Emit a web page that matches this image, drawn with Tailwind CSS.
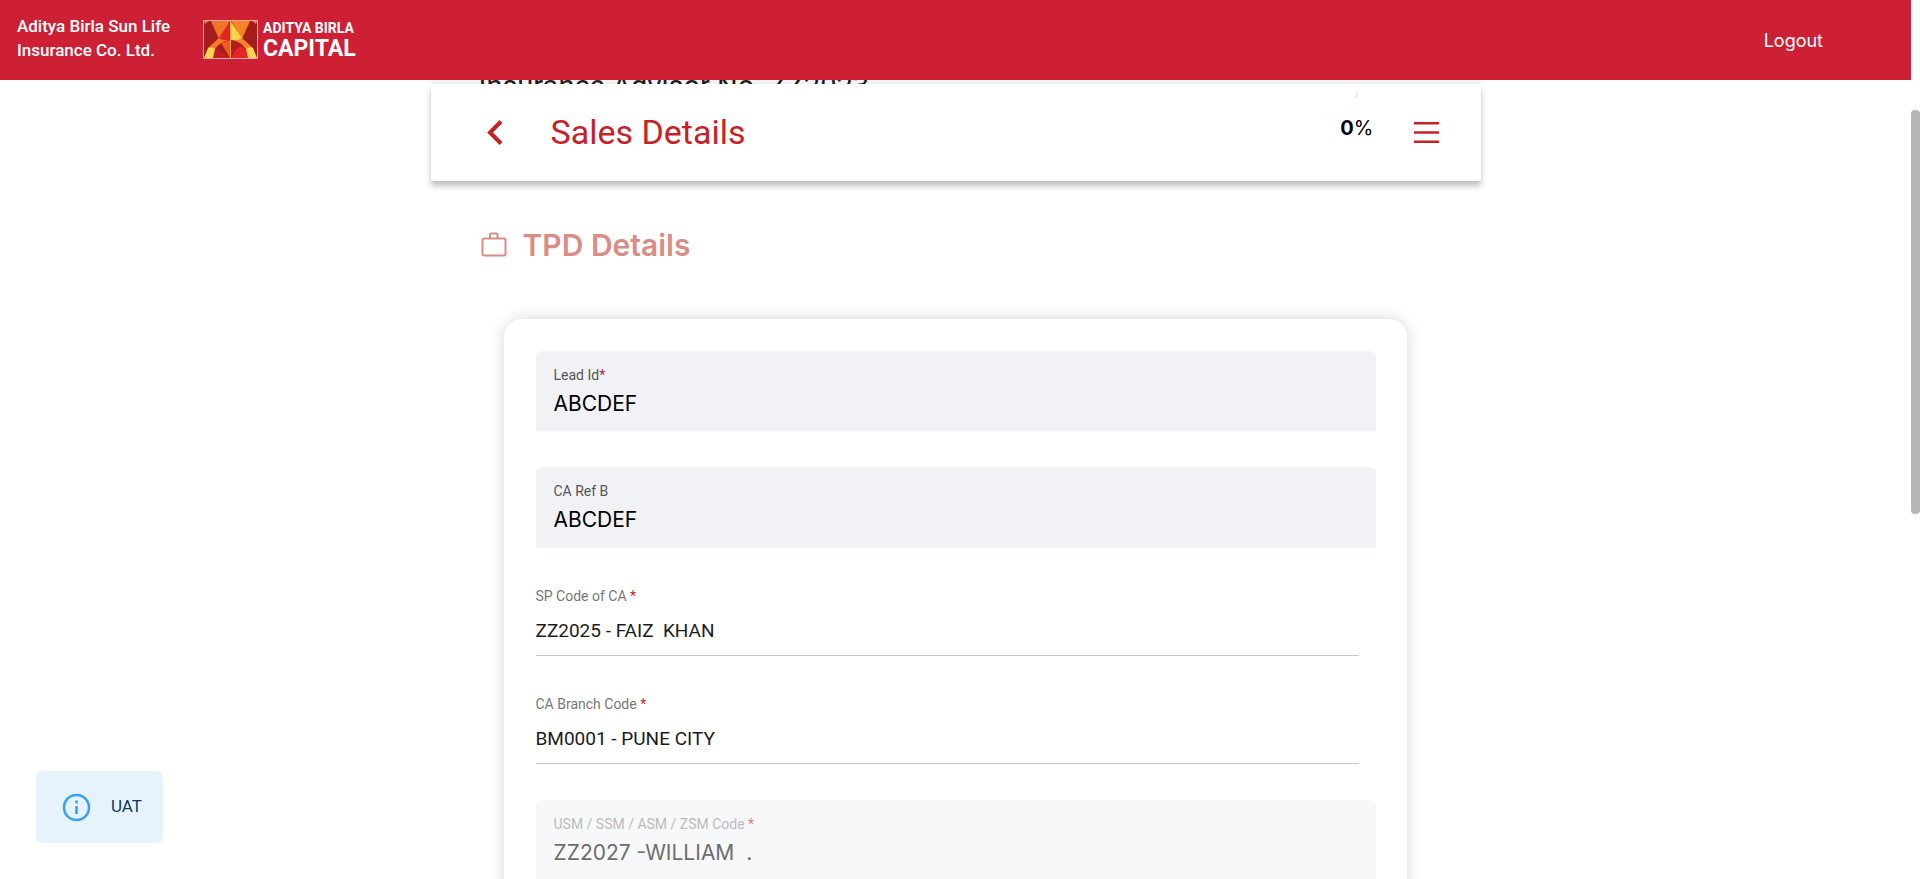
<!DOCTYPE html>
<html lang="en">
<head>
<meta charset="utf-8">
<title>Sales Details</title>
<script src="https://cdn.jsdelivr.net/npm/@tailwindcss/browser@4"></script>
</head>
<body class="h-screen overflow-hidden bg-white font-['Roboto',sans-serif] text-[#1c1c1c] flex">
<div class="flex-1 min-w-0 flex flex-col h-full">
  <header class="h-20 shrink-0 bg-[#ce2035] flex items-center text-white pl-[17px] pr-[88px]">
    <p class="w-[186px] pb-1 text-[17px] leading-6 font-medium">Aditya Birla Sun Life<br>Insurance Co. Ltd.</p>
    <svg class="w-[55px] h-[39px] mb-0.5" viewBox="0 0 55 39" aria-hidden="true">
      <rect width="55" height="39" fill="#a51c1e"/>
      <path d="M1 1H6L2 4Z" fill="#f47a29"/>
      <path d="M54 1H49L53 4Z" fill="#f47a29"/>
      <path d="M8 1H27L16 19Z" fill="#f37427"/>
      <path d="M28 1H47L39 19Z" fill="#f68326"/>
      <path d="M27 2L16 18Q20 22 27 20Z" fill="#e2231f"/>
      <path d="M28 2L39 18Q36 22 28 20Z" fill="#fbd552"/>
      <path d="M16 18L5 28L12 29Q19 21 27 20Q20 21 16 18Z" fill="#f47a29"/>
      <path d="M39 18L50 28L43 29Q36 21 28 20Q35 21 39 18Z" fill="#f68326"/>
      <path d="M10 38Q12 22 27 20V38Z" fill="#a51c1e"/>
      <path d="M45 38Q43 22 28 20V38Z" fill="#b01c20"/>
      <path d="M27 20V38L18 23Z" fill="#ee5a24"/>
      <path d="M27 38L13 28L10 38Z" fill="#c11f22"/>
      <path d="M28 38L42 28Q35 23 28 38Z" fill="#e5262b"/>
      <path d="M45 38L42 28L28 38Z" fill="#e5262b"/>
      <path d="M5 28Q9 26 12 29L10 38H1Z" fill="#fbd552"/>
      <path d="M50 28Q46 26 43 29L45 38H54Z" fill="#fbd552"/>
      <path d="M27.500 1V38" stroke="#f9a13a"/>
      <rect x=".5" y=".5" width="54" height="38" fill="none" stroke="#f0a6a4"/>
    </svg>
    <div class="pl-[5px] pb-0.5 flex flex-col justify-center font-bold whitespace-nowrap">
      <span class="text-[14px] leading-[18px]">ADITYA BIRLA</span>
      <span class="text-[23px] leading-[23px]">CAPITAL</span>
    </div>
    <button type="button" class="ml-auto pt-0.5 text-[18px] leading-6 font-['Inter',sans-serif] cursor-pointer">Logout</button>
  </header>

  <main class="w-[1050px] max-w-full mx-auto flex-1 min-h-0">
    <div class="h-1 overflow-hidden bg-[#f3f3f6] pl-12">
      <p class="text-[29px] leading-3 whitespace-nowrap">Insurance Advisor No. ZZ2023</p>
    </div>
    <div class="relative h-[97px] bg-white shadow-[0_5px_6px_rgba(0,0,0,0.25)] flex items-center pl-[56px] pr-[42px] text-[#c62127]">
      <button type="button" aria-label="Back" class="w-4 cursor-pointer">
        <svg class="w-4 h-[25px]" viewBox="0 0 16 25" fill="none" stroke="currentColor" stroke-width="4"><path d="M14 1.500L3 12.500L14 23.500"/></svg>
      </button>
      <h1 class="pl-12 pb-0.5 text-[34px] leading-10">Sales Details</h1>
      <div class="ml-auto h-full flex flex-col items-center pt-2">
        <span class="w-px h-1.5 bg-[#cfe9e4]"></span>
        <span class="mt-4 text-[20px] leading-7 text-black font-['Inter',sans-serif]"><b class="font-bold">0</b>%</span>
      </div>
      <button type="button" aria-label="Menu" class="ml-10 w-[25px] cursor-pointer">
        <svg class="w-[25px] h-[21px]" viewBox="0 0 25 21" fill="currentColor"><path d="M0 0H25V2.500H0ZM0 9.250H25V11.750H0ZM0 18.500H25V21H0Z"/></svg>
      </button>
    </div>
    <h2 class="mt-11 pl-[50px] flex items-center text-[#d88d85] text-[30px] leading-10 font-semibold font-['Inter',sans-serif]">
      <svg class="w-[26px] h-[26px] mr-4" viewBox="0 0 26 26" fill="none" stroke="currentColor" stroke-width="2"><rect x="1.500" y="6.500" width="23" height="17" rx="1.500"/><path d="M9 6V2.500Q9 1.500 10 1.500H15.500Q16.500 1.500 16.500 2.500V6"/></svg>TPD Details</h2>
    <form class="ml-[73px] mr-[74px] mt-[54px] rounded-[18px] shadow-[0_0_16px_rgba(0,0,0,0.16)] pl-8 pr-[31px] pt-8 pb-24">
      <div class="h-20 rounded-t-[6px] bg-[#f1f2f6] pl-[18px] pt-3.5">
        <label for="lead" class="block text-[14px] leading-5 text-[#555]">Lead Id<span class="text-[#d0202e]">*</span></label>
        <input id="lead" value="ABCDEF" class="block w-full h-[38px] pb-0.5 text-[21px] text-black outline-none font-['Inter',sans-serif]">
      </div>
      <div class="mt-9 h-[81px] rounded-t-[6px] bg-[#f1f2f6] pl-[18px] pt-3.5">
        <label for="ref" class="block text-[14px] leading-5 text-[#555]">CA Ref B</label>
        <input id="ref" value="ABCDEF" class="block w-full h-[38px] pb-0.5 text-[21px] text-black outline-none font-['Inter',sans-serif]">
      </div>
      <div class="mt-[38px] mr-[17px] h-[70px] border-b border-[#c6c6c6]">
        <label for="sp" class="block text-[14px] leading-5 text-[#777]">SP Code of CA <span class="text-[#d0202e]">*</span></label>
        <input id="sp" value="ZZ2025 - FAIZ  KHAN" class="block w-full h-[48px] text-[19px] outline-none">
      </div>
      <div class="mt-[38px] mr-[17px] h-[70px] border-b border-[#c6c6c6]">
        <label for="branch" class="block text-[14px] leading-5 text-[#777]">CA Branch Code <span class="text-[#d0202e]">*</span></label>
        <input id="branch" value="BM0001 - PUNE CITY" class="block w-full h-[48px] text-[19px] outline-none">
      </div>
      <div class="mt-9 h-20 rounded-t-[6px] bg-[#f7f8fa] pl-[18px] pt-3.5">
        <label for="usm" class="block text-[14px] leading-5 text-[#bbb]">USM / SSM / ASM / ZSM Code <span class="text-[#dc7f87]">*</span></label>
        <input id="usm" value="ZZ2027 -WILLIAM  ." disabled class="block w-full h-[38px] pb-0.5 text-[21px] text-[#6d6d6d] outline-none font-['Inter',sans-serif]">
      </div>
    </form>
  </main>
</div>
<div class="w-[9px] shrink-0 pt-[110px]"><div class="h-[404px] rounded-[4px] bg-[#b7b7b7]"></div></div>

<div role="status" class="fixed left-9 bottom-9 h-[72px] w-[127px] rounded-[6px] bg-[#e6f3fd] flex items-center pl-[26px] text-[#0d3c61] text-[17px]">
  <svg class="w-[29px] h-[29px] mr-5" viewBox="0 0 29 29" fill="none" stroke="#35a0f4" stroke-width="2.500"><circle cx="14.500" cy="14.500" r="12.500"/><path d="M14.500 13V21M14.500 7.500V10.500"/></svg>UAT
</div>
</body>
</html>
